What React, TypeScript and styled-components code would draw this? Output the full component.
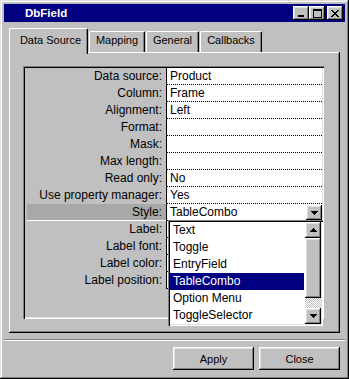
import React from 'react';
import styled, { createGlobalStyle, css } from 'styled-components';

const GlobalStyle = createGlobalStyle`
  html, body { margin: 0; padding: 0; background: #c0c0c0; }
  body { font-family: "Liberation Sans", Arial, sans-serif; }
`;

const raised = css`
  box-shadow: inset -1px -1px #000, inset 1px 1px #fff, inset -2px -2px #808080, inset 2px 2px #dfdfdf;
`;

const sunken = css`
  box-shadow: inset 1px 1px #808080, inset 2px 2px #000, inset -1px -1px #fff, inset -2px -2px #dfdfdf;
`;

const Window = styled.div`
  width: 349px;
  height: 379px;
  box-sizing: border-box;
  padding: 4px;
  background: #c0c0c0;
  display: flex;
  flex-direction: column;
  box-shadow: inset -1px -1px #000, inset 1px 1px #dfdfdf, inset -2px -2px #808080, inset 2px 2px #fff;
`;

const TitleBar = styled.div`
  height: 18px;
  background: #000080;
  display: flex;
  align-items: center;
  padding: 0 2px 0 21px;
`;

const Title = styled.div`
  flex: 1;
  color: #fff;
  font-weight: bold;
  font-size: 11.5px;
`;

const CaptionButton = styled.div<{ $gap?: boolean }>`
  width: 16px;
  height: 14px;
  margin-left: ${p => (p.$gap ? '2px' : '0')};
  background: #c0c0c0;
  display: flex;
  align-items: center;
  justify-content: center;
  ${raised};
`;

const Body = styled.div`
  padding: 6px 5px 0 5px;
  display: flex;
  flex-direction: column;
`;

const TabStrip = styled.div`
  height: 24px;
  display: flex;
  align-items: flex-end;
`;

const Tab = styled.div<{ $active?: boolean; $w: number }>`
  position: relative;
  z-index: 1;
  box-sizing: border-box;
  width: ${p => p.$w}px;
  background: #c0c0c0;
  border-top: 1px solid #fff;
  border-left: 1px solid #fff;
  border-right: 1px solid #000;
  box-shadow: inset -1px 0 #808080;
  border-radius: 2px 2px 0 0;
  font-size: 11px;
  line-height: 13px;
  color: #000;
  text-align: center;
  ${p =>
    p.$active
      ? css`
          height: 26px;
          margin-bottom: -2px;
          padding: 5px 0 0 4px;
        `
      : css`
          height: 21px;
          margin-left: 1px;
          padding-top: 2px;
        `}
`;

const Panel = styled.div`
  height: 281px;
  box-sizing: border-box;
  padding: 14px 16px 14px 14px;
  box-shadow: inset -1px -1px #000, inset 1px 1px #fff, inset -2px -2px #808080;
`;

const Grid = styled.div`
  position: relative;
  height: 253px;
  box-sizing: border-box;
  padding: 2px;
  ${sunken};
`;

const Row = styled.div`
  display: flex;
  height: 17px;
`;

const Label = styled.div<{ $selected?: boolean }>`
  width: 141px;
  box-sizing: border-box;
  text-align: right;
  padding-right: 4px;
  font-size: 12px;
  line-height: 17px;
  color: #000;
  white-space: nowrap;
  ${p =>
    p.$selected &&
    css`
      width: 139px;
      margin-left: 2px;
      background: #a8a8a8;
      border-bottom: 1px solid #fff;
      line-height: 16px;
    `}
`;

const Value = styled.div`
  position: relative;
  flex: 1;
  box-sizing: border-box;
  background: #fff;
  border-left: 1px solid #000;
  border-bottom: 1px dotted #000;
  padding-left: 3px;
  font-size: 12px;
  line-height: 16px;
  color: #000;
`;

const ComboButton = styled.div`
  position: absolute;
  right: 0;
  top: 1px;
  width: 16px;
  height: 15px;
  background: #c0c0c0;
  display: flex;
  align-items: center;
  justify-content: center;
  ${raised};
`;

const DropList = styled.div`
  position: absolute;
  left: 145px;
  top: 154px;
  width: 155px;
  height: 106px;
  box-sizing: border-box;
  padding: 2px;
  background: #fff;
  display: flex;
  ${sunken};
`;

const Items = styled.div`
  flex: 1;
`;

const Item = styled.div<{ $selected?: boolean }>`
  height: 17px;
  line-height: 17px;
  padding-left: 3px;
  font-size: 12px;
  color: ${p => (p.$selected ? '#fff' : '#000')};
  background: ${p => (p.$selected ? '#000080' : 'transparent')};
  margin-right: 1px;
`;

const ScrollBar = styled.div`
  width: 16px;
  display: flex;
  flex-direction: column;
`;

const ScrollButton = styled.div`
  height: 16px;
  background: #c0c0c0;
  display: flex;
  align-items: center;
  justify-content: center;
  ${raised};
`;

const Thumb = styled.div`
  height: 60px;
  background: #c0c0c0;
  ${raised};
`;

const Track = styled.div`
  flex: 1;
  background: repeating-conic-gradient(#c0c0c0 0 25%, #fff 0 50%) 0 0 / 2px 2px;
`;

const Separator = styled.div`
  margin-top: 6px;
  height: 2px;
  box-sizing: border-box;
  border-top: 1px solid #808080;
  border-bottom: 1px solid #fff;
`;

const ButtonRow = styled.div`
  display: flex;
  justify-content: flex-end;
  gap: 5px;
  padding: 6px 5px 0 5px;
`;

const Button = styled.div`
  width: 81px;
  height: 23px;
  display: flex;
  align-items: center;
  justify-content: center;
  font-size: 11px;
  color: #000;
  background: #c0c0c0;
  ${raised};
`;

const Arrow = ({ up }: { up?: boolean }) => (
  <svg width="7" height="4" viewBox="0 0 7 4">
    <path d={up ? 'M3 0h1v1h1v1h1v1h1v1H0V3h1V2h1V1h1z' : 'M0 0h7v1H6v1H5v1H4v1H3V3H2V2H1V1H0z'} fill="#000" />
  </svg>
);

const fields: [string, string][] = [
  ['Data source:', 'Product'],
  ['Column:', 'Frame'],
  ['Alignment:', 'Left'],
  ['Format:', ''],
  ['Mask:', ''],
  ['Max length:', ''],
  ['Read only:', 'No'],
  ['Use property manager:', 'Yes'],
  ['Style:', 'TableCombo'],
  ['Label:', ''],
  ['Label font:', ''],
  ['Label color:', ''],
  ['Label position:', ''],
];

const styles = ['Text', 'Toggle', 'EntryField', 'TableCombo', 'Option Menu', 'ToggleSelector'];

export default function App() {
  return (
    <>
      <GlobalStyle />
      <Window>
        <TitleBar>
          <Title>DbField</Title>
          <CaptionButton>
            <svg width="8" height="7" viewBox="0 0 8 7">
              <rect x="1" y="5" width="6" height="2" fill="#000" />
            </svg>
          </CaptionButton>
          <CaptionButton>
            <svg width="9" height="9" viewBox="0 0 9 9">
              <path d="M0 0h9v9H0zM1 2v6h7V2z" fill="#000" fillRule="evenodd" />
            </svg>
          </CaptionButton>
          <CaptionButton $gap>
            <svg width="8" height="7" viewBox="0 0 8 7">
              <path
                d="M0 0h2v1h1v1h2V1h1V0h2v1H7v1H6v1H5v1h1v1h1v1h1v1H6V6H5V5H3v1H2v1H0V6h1V5h1V4h1V3H2V2H1V1H0z"
                fill="#000"
              />
            </svg>
          </CaptionButton>
        </TitleBar>
        <Body>
          <TabStrip>
            <Tab $active $w={79}>Data Source</Tab>
            <Tab $w={56}>Mapping</Tab>
            <Tab $w={53}>General</Tab>
            <Tab $w={62}>Callbacks</Tab>
          </TabStrip>
          <Panel>
            <Grid>
              {fields.map(([label, value]) => {
                const isStyle = label === 'Style:';
                return (
                  <Row key={label}>
                    <Label $selected={isStyle}>{label}</Label>
                    <Value>
                      {value}
                      {isStyle && (
                        <ComboButton>
                          <Arrow />
                        </ComboButton>
                      )}
                    </Value>
                  </Row>
                );
              })}
              <DropList>
                <Items>
                  {styles.map(s => (
                    <Item key={s} $selected={s === 'TableCombo'}>
                      {s}
                    </Item>
                  ))}
                </Items>
                <ScrollBar>
                  <ScrollButton>
                    <Arrow up />
                  </ScrollButton>
                  <Thumb />
                  <Track />
                  <ScrollButton>
                    <Arrow />
                  </ScrollButton>
                </ScrollBar>
              </DropList>
            </Grid>
          </Panel>
        </Body>
        <Separator />
        <ButtonRow>
          <Button>Apply</Button>
          <Button>Close</Button>
        </ButtonRow>
      </Window>
    </>
  );
}
